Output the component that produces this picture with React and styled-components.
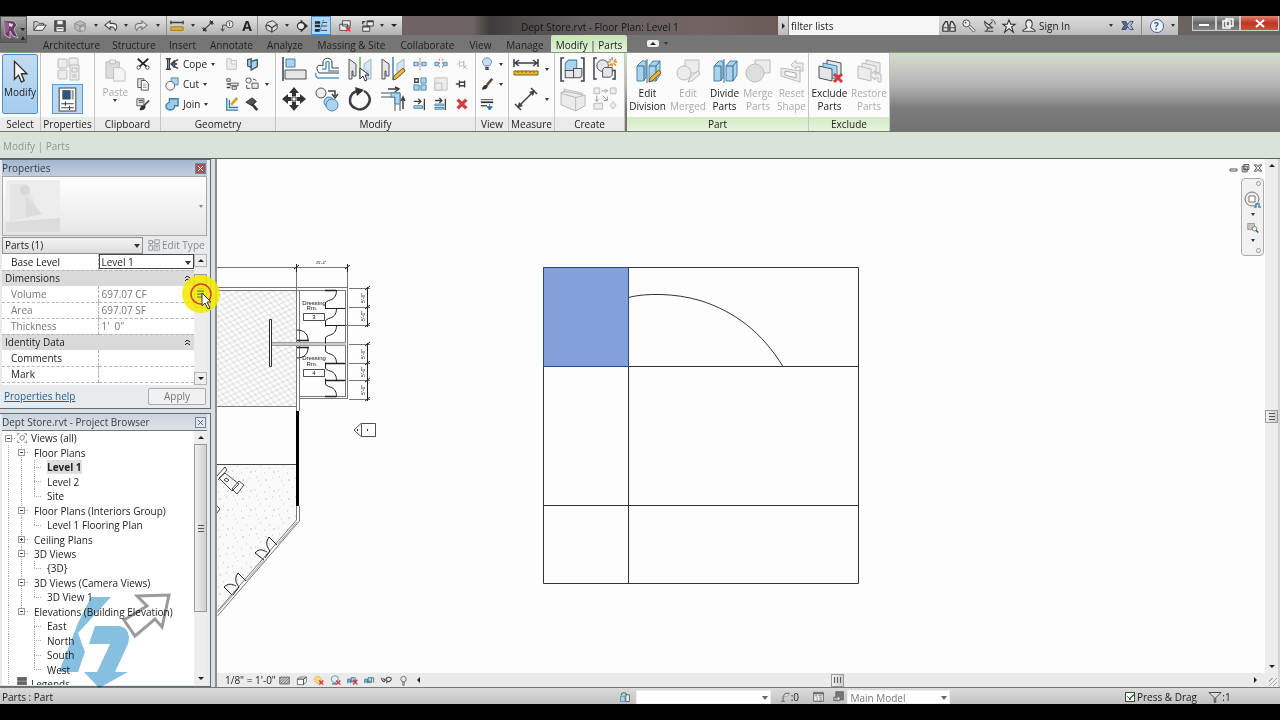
import React from "react";
import styled, { createGlobalStyle } from "styled-components";

const GlobalStyle = createGlobalStyle`
  * { box-sizing: border-box; }
  body { margin: 0; background: #000; }
  body, button, input, select, table {
    font-family: "Open Sans", "Noto Sans", sans-serif;
    font-size: 10px;
    line-height: 14px;
    color: #222;
  }
  button { padding: 0; border: 0; background: none; }
`;

/* ---------- icons ---------- */

const dark = { fill: "none", stroke: "#3c4045", strokeWidth: 1.5 };
const thin = { fill: "none", stroke: "#3c4045", strokeWidth: 1 };
const pale = { fill: "#ececec", stroke: "#bcbcbc", strokeWidth: 1 };
const blue = { fill: "#a9d3ee", stroke: "#4585ac", strokeWidth: 1 };
const grey = { fill: "#e6e6e8", stroke: "#4c5055", strokeWidth: 1 };
const red = { fill: "none", stroke: "#d0363c", strokeWidth: 2 };

const art = {
  open: <><path d="M1 13V3h4l2 2h5v3" {...thin} /><path d="M1 13L5 7h10l-4 6z" fill="#eee" stroke="#333" /></>,
  save: <><path d="M2 2h12v12H2z" fill="#555" stroke="#333" /><path d="M5 2h6v4H5zM4 9h8v5H4z" fill="#eee" /><path d="M5 11h6" {...thin} /></>,
  cubeDim: <><path d="M2 5l6-3 6 3v6l-6 4-6-4z" fill="#bbb" stroke="#888" /><path d="M2 5l6 3 6-3M8 8v7" fill="none" stroke="#888" /><circle cx="11" cy="11" r="3" fill="#ccc" stroke="#888" /></>,
  undo: <path d="M1 7l6-5v3h3c5 0 6 4 3 8-1-3-2-4-6-4v3z" fill="#eee" stroke="#444" strokeWidth="1.2" />,
  redo: <path d="M15 7L9 2v3H6C1 5 0 9 3 13c1-3 2-4 6-4v3z" fill="#ddd" stroke="#777" strokeWidth="1.2" />,
  ruler: <><path d="M1 4h14M1 2v4M15 2v4" {...dark} /><path d="M1 9h14v4H1z" fill="#e5b12f" stroke="#9a7414" /></>,
  diag: <><path d="M3 13L13 3" {...dark} /><path d="M1 10l5 5M10 1l5 5" {...thin} /><path d="M2 14l1-5 4 4zM14 2L9 3l4 4z" fill="#333" /></>,
  tag: <><circle cx="11" cy="6" r="4" fill="#eee" stroke="#444" /><path d="M7 7H3v6M1 11l2 3 2-3" {...thin} /><path d="M10 5l1-1v4" {...thin} /></>,
  house: <><path d="M2 8l2-4 6-2 5 4v5l-6 4-6-3z" fill="#ddd" stroke="#333" /><path d="M2 8l3-1 4 3 6-4M9 10v5" {...dark} /></>,
  section: <><path d="M8 1l8 7-8 7z" fill="#333" /><circle cx="8" cy="8" r="4" fill="#eee" stroke="#333" strokeWidth="1.5" /><path d="M8 1v14" {...thin} /><circle cx="8" cy="8" r="3" fill="#eee" /></>,
  lines: <><path d="M1 4h6M1 8h6M1 13h6" stroke="#1f2d3a" strokeWidth="3" /><path d="M9 4h6M8 8h7M8 13h7" {...thin} /><path d="M11 1L6 15" stroke="#3c86bb" /></>,
  closeWins: <><path d="M5 2h9v6H5zM2 6h9v7H2z" fill="#eee" stroke="#444" /><path d="M9 9l5 5M14 9l-5 5" {...red} /></>,
  switchWins: <><path d="M7 2h7v6H7zM2 8h8v6H2z" fill="#eee" stroke="#333" /><path d="M7 3h7M2 9h8" {...dark} /><path d="M2 6V3h3" {...dark} /></>,
  binoc: <><path d="M1 14V8l3-5h2l1 5v6zM9 14V8l1-5h2l3 5v6z" fill="#ddd" stroke="#333" strokeWidth="1.4" /><path d="M7 7h2M1 10h6M9 10h6" {...thin} /></>,
  key: <><path d="M7 8l6 7 2-2-6-6" fill="#eee" stroke="#444" /><circle cx="5" cy="5" r="4" fill="#eee" stroke="#444" /><circle cx="4" cy="4" r="1" fill="#444" /></>,
  dish: <><path d="M3 3c0 6 4 8 9 7zM3 14h10M7 10l-2 4M8 7l4-4" fill="#ddd" stroke="#444" strokeWidth="1.3" /><path d="M10 1c3 0 5 1 5 5" {...thin} /></>,
  star: <path d="M8 1l2 5h5l-4 3 2 6-5-4-5 4 2-6-4-3h5z" fill="#eee" stroke="#333" strokeWidth="1.2" />,
  person: <path d="M1 14c0-3 4-3 5-4-3-3-2-9 2-9s5 6 2 9c1 1 5 1 5 4z" fill="#eee" stroke="#444" strokeWidth="1.2" />,
  exchange: <><path d="M1 3h5l3 5-3 5H1l3-5z" fill="#4e6b9c" stroke="#333f5c" /><path d="M15 3h-4L7 8l4 5h4l-3-5z" fill="#aebdd6" stroke="#333f5c" /></>,
  cursor: <path d="M4 1v13l3-3 2 5 2-1-2-5h4z" fill="#fff" stroke="#333" strokeWidth="1" />,
  typeProps: <><rect x="2" y="2" width="9" height="9" rx="1" {...pale} /><rect x="13" y="1" width="9" height="9" rx="1" {...pale} /><rect x="2" y="13" width="9" height="9" rx="1" {...pale} /><path d="M14 8h9v15h-9z" {...pale} /><path d="M16 11h5v4h-5zM16 18h5M16 20h5" stroke="#bcbcbc" fill="none" /></>,
  props: <><path d="M4 1h16v22H4z" fill="#fff" stroke="#444" /><path d="M7 3h8v9H7z" fill="#2f5476" /><path d="M17 3v9" stroke="#999" strokeWidth="2" /><path d="M6 16h12M6 20h12M10 14v4M14 18v4" {...thin} /></>,
  paste: <><path d="M2 3h14v17H2z" fill="#ddd" stroke="#bbb" /><path d="M6 1h6v4H6z" {...pale} /><path d="M10 9h8l4 4v10H10z" fill="#f5f5f5" stroke="#c0c0c0" /></>,
  cutClip: <><path d="M2 2l10 9M14 2L4 11" stroke="#222" strokeWidth="2" /><circle cx="3" cy="12" r="2" {...thin} /><circle cx="13" cy="12" r="2" {...thin} /></>,
  copyClip: <><path d="M2 2h7v10H2z" {...grey} /><path d="M6 4h5l3 3v8H6z" fill="#fff" stroke="#444" /><path d="M8 8h4M8 10h4M8 12h4" stroke="#999" /></>,
  match: <><path d="M1 2h8v8H1z" {...grey} /><path d="M3 4h5M3 6h5" {...thin} /><path d="M15 4L9 10" stroke="#444" strokeWidth="2" /><path d="M4 15c1-5 3-6 7-5 0 4-3 6-7 5z" fill="#333" /></>,
  cope: <><path d="M1 2h6M1 14h6M3 2v12M5 2v12" {...dark} /><path d="M15 3l-4 2v6l4 2M14 8H8M11 4L7 8l4 4" {...dark} /></>,
  cut: <><path d="M7 1h8v8H7z" {...blue} /><circle cx="6" cy="10" r="5" fill="#f5f5f5" stroke="#555" /></>,
  join: <path d="M5 2h10v8h-4c0 7-10 6-10 0 0-2 2-3 4-4z" fill="#9ccbe8" stroke="#3c7faa" strokeWidth="1.5" />,
  wallDim: <><path d="M2 2h5v6h6v6H2z" {...pale} /><path d="M7 4h6v4" {...pale} /></>,
  face: <path d="M3 3l4-1v10l-4-2zM7 5l7-2v8l-7 4z" fill="#a9d3ee" stroke="#3b5870" strokeWidth="1.5" />,
  beam: <><path d="M2 2h4v3H2z" {...grey} /><path d="M2 8h4M2 12h4" {...dark} /><path d="M6 7h9v3H6zM8 11h5v3H8z" {...grey} /></>,
  paint: <><circle cx="4" cy="4" r="3" {...thin} /><path d="M2 9v4h4M9 2l4 2" {...thin} /><path d="M8 7h7v6H8z" {...grey} /></>,
  split: <><path d="M2 1v14h13M5 3v9h10" stroke="#2f78a8" fill="none" strokeWidth="1.5" /><path d="M14 1L7 9" stroke="#d99b22" strokeWidth="3" /></>,
  hammer: <><path d="M1 6l7-5 5 4-5 5z" fill="#555" stroke="#222" /><path d="M8 8l6 7" stroke="#333" strokeWidth="3" /></>,
  align: <><path d="M1 0v24" {...dark} /><path d="M4 2h9v8H4z" {...blue} /><path d="M3 13h21v9H3z" {...grey} /></>,
  offset: <><path d="M24 16H4c-5-7 0-9 4-7V5c0-5 9-5 9 0v6h7" {...thin} /><path d="M24 21H3c-2-1-3-3-2-5M11 12V6c0-2 3-2 3 0v8h10M7 12h4" fill="none" stroke="#5b9dc6" strokeWidth="1.5" /></>,
  mirrorPick: <><path d="M1 2l7 5v12H5v-5H4v8H1z" {...grey} /><path d="M23 2l-7 5v12h3v-5h1v8h3z" fill="#d5e6f2" stroke="#9bb4c4" /><path d="M12 0v22" stroke="#65b55a" strokeWidth="1.5" /><path d="M12 11v11l3-3 2 5 2-1-2-5h4z" fill="#fff" stroke="#333" /></>,
  mirrorDraw: <><path d="M1 2l7 5v12H5v-5H4v8H1z" {...grey} /><path d="M23 2l-7 5v12h3v-5h4z" fill="#d5e6f2" stroke="#9bb4c4" /><path d="M12 0v23" stroke="#3b87bd" strokeWidth="1.5" /><path d="M12 23l1-4 9-8 2 3-9 8z" fill="#efb83b" stroke="#7b5614" /></>,
  move: <><path d="M12 0l5 6h-3v3h-4V6H7zM12 24l5-6h-3v-3h-4v3H7zM0 12l6-5v3h3v4H6v3zM24 12l-6-5v3h-3v4h3v3z" fill="#333" /><path d="M10 10h4v4h-4z" fill="#fff" stroke="#333" /></>,
  copy: <><circle cx="6" cy="6" r="5" fill="#eee" stroke="#555" /><path d="M13 4h7v5M17 7l3 4 3-4" {...dark} /><circle cx="14" cy="15" r="5" {...blue} /><circle cx="17" cy="18" r="6" {...blue} /></>,
  rotate: <><path d="M9 4C0 7 0 18 7 21c9 5 17-5 14-12-1-2-3-4-5-5" fill="none" stroke="#3b3e42" strokeWidth="2.5" /><path d="M7 0l9 3-7 6z" fill="#333" /></>,
  trim: <><path d="M7 2h10M14 0l4 2-4 3M22 22V12M20 14l2-4 2 4" {...dark} /><path d="M0 6h19v18M0 10h14v14" stroke="#4c4f54" fill="none" /><path d="M10 6h9v11h-5v-7h-4z" {...blue} /></>,
  split1: <><path d="M1 6h5v4H1zM10 6h5v4h-5z" {...blue} /><path d="M8 1v14" stroke="#c44" strokeDasharray="2 1" /></>,
  split2: <><path d="M1 6h4v4H1zM11 6h4v4h-4z" {...blue} /><path d="M6 2v12M10 2v12" stroke="#c55" strokeDasharray="2 2" /></>,
  unpin: <><path d="M2 8h3M5 4v8M5 6h5v4H5M10 4v8" fill="none" stroke="#bbb" /><path d="M9 9l5 5M14 9l-5 5" stroke="#bbb" /></>,
  array: <><path d="M2 2h4v4H2z" fill="#fff" stroke="#444" strokeWidth="1.5" /><path d="M9 1h6v6H9zM1 9h6v6H1zM9 9h6v6H9z" {...blue} /></>,
  scale: <><path d="M1 1h14v14H1z" {...pale} /><path d="M1 7h8v8H1z" {...pale} /></>,
  pin: <path d="M1 8h4M5 4v8M5 6h6v4H5M11 4v8" {...dark} />,
  extend1: <><path d="M1 5h8M6 2l3 3-3 3" {...dark} /><path d="M1 10h10v3H1z" {...blue} /><path d="M13 2v13" {...dark} /></>,
  extend2: <><path d="M1 4h8M6 1l3 3-3 3" {...dark} /><path d="M1 8h10v2H1zM1 12h10v2H1z" {...blue} /><path d="M13 2v13" {...dark} /></>,
  del: <path d="M3 3l10 10M13 3L3 13" stroke="#cf3f45" strokeWidth="4" />,
  bulb: <><path d="M5 10C0 4 5 1 8 1s8 3 3 9z" fill="#c8dcf5" stroke="#6b86b5" /><path d="M6 12h4M6 14h4" {...dark} /></>,
  brush: <><path d="M14 2L8 9" stroke="#6b4a2c" strokeWidth="3" /><path d="M2 14c1-4 4-6 7-5 0 4-3 6-7 5z" fill="#333" /></>,
  lineWork: <><path d="M1 3h14" {...thin} /><path d="M1 6h14" stroke="#333" strokeWidth="2" /><path d="M1 10h7" {...dark} /><path d="M11 8v4M8 11l3 4 3-4z" fill="#3577a8" stroke="#3577a8" /></>,
  measureBig: <><path d="M1 6h22M5 3L1 6l4 3M19 3l4 3-4 3M0 2v8M24 2v8" {...dark} /><path d="M0 14h24v4H0z" fill="#eab72f" stroke="#87620f" /><path d="M4 14v2M8 14v2M12 14v2M16 14v2M20 14v2" stroke="#87620f" /></>,
  dimBig: <><path d="M4 20L20 4M1 17l6 6M17 1l6 6" {...dark} /><path d="M3 21l2-6 4 4zM21 3l-6 2 4 4z" fill="#444" /></>,
  group: <><path d="M4 1H1v22h3M20 1h3v22h-3" {...dark} /><path d="M5 6l3-3h8v9h-3v1H5z" {...blue} /><path d="M5 13h8v7H5zM13 11h8v7l-2 2h-6z" {...grey} /></>,
  similar: <><path d="M4 1H1v22h3M20 14h3v9h-3" {...dark} /><circle cx="10" cy="9" r="6" {...grey} /><path d="M10 13l2-2h8v8l-2 2h-8z" {...grey} /><path d="M20 0v10M15 5h10M17 2l7 7M24 2l-7 7" stroke="#e3872b" strokeWidth="1.5" /><circle cx="20" cy="5" r="2" fill="#fff3c0" /></>,
  assembly: <><path d="M4 6V2l17 4v13" {...pale} /><path d="M1 6l14 4 9-2v10l-9 5-14-6z" {...pale} /><path d="M1 6l3-2 20 4M15 10v13" {...pale} fill="none" /></>,
  parts: <><path d="M1 1h6v6H1zM18 1h6v6h-6zM1 17h9v6H1zM18 19l3-4 3 4-3 4z" {...pale} /><path d="M9 4h6M13 2l2 2-2 2M4 9v6M2 13l2 2 2-2M10 9l5 5M15 10v4h-4" fill="none" stroke="#999" /></>,
  divide: <><path d="M1 7l5-5h4v17l-3 3H1zM13 7l4-5h7v14l-4 6h-7z" {...blue} /><path d="M1 7h7v15M13 7h7v15M20 7l4-5M11 0v24" fill="none" stroke="#376787" /></>,
  editMerged: <><path d="M9 1h14v13H9z" {...pale} /><circle cx="8" cy="14" r="7" {...pale} /><path d="M12 23l2-5 8-6 2 3-8 7z" {...pale} /></>,
  merge: <><path d="M9 1h15v13H9z" {...pale} /><circle cx="9" cy="14" r="9" fill="#dedede" stroke="#bbb" /></>,
  reset: <><path d="M1 9l19 3v11L1 17z" {...pale} /><path d="M5 12l11 2v5L5 16z" fill="#fff" stroke="#aaa" /><path d="M11 6l5-5v3h7v8h-3V8h-4v2z" {...pale} /></>,
  exclude: <><path d="M9 1l14 3v13L9 14z" {...grey} /><path d="M5 4l14 3v13L5 17z" {...blue} /><path d="M1 7l13 3v12L1 19z" {...grey} /><path d="M16 15l8 8M24 15l-8 8" stroke="#d8363a" strokeWidth="3" /></>,
  restore: <><path d="M9 1l14 3v10L9 11z" {...pale} /><path d="M5 4l14 3v10L5 14z" {...pale} /><path d="M1 7l13 3v12L1 19z" {...pale} /><path d="M13 16l5-4v3h6v8h-3v-4h-3v2z" {...pale} /></>,
  pencilOver: <path d="M13 23l1-4 9-8 2 3-9 8z" fill="#efb83b" stroke="#7b5614" />,
  editType: <path d="M1 2h5v4H1zM9 1h6v5H9zM1 9h5v6H1zM8 8h7v7H8zM10 10h3M10 12h3M3 6v3M6 4h3" fill="none" stroke="#888" />,
  viewsRoot: <><path d="M1 4V1h3M12 1h3v3M1 12v3h3M15 12v3h-3" {...thin} /><path d="M5 6l3-2 4 1-1 5-3 2-3-2z" {...thin} /></>,
  detail: <><path d="M1 3h14v10H1z" fill="#ccc" stroke="#444" /><path d="M1 6l3-3M1 10l7-7M2 13L12 3M6 13l9-9M10 13l5-5" stroke="#555" /></>,
  model: <path d="M2 6l3-3h10l-4 3zM2 6h9v8H2zM11 6l4-3v7l-4 4z" fill="#fff" stroke="#444" />,
  sun: <><circle cx="7" cy="7" r="5" fill="#f6dc7d" stroke="#c79023" strokeDasharray="2 1" /><path d="M9 8l6 6M15 8l-6 6" {...red} /></>,
  shadow: <><circle cx="7" cy="6" r="5" fill="#e4f0f6" stroke="#3a7696" /><path d="M3 13h6" {...dark} /><path d="M9 8l6 6M15 8l-6 6" {...red} /></>,
  crop: <><path d="M1 12V6h4v6M6 4h6v6H6zM1 9h13" fill="#bfdae8" stroke="#3a7696" strokeWidth="1.3" /><path d="M9 7l6 7M15 7l-6 7" {...red} /></>,
  cropShow: <><path d="M1 12V6h4v6M6 4h5v7H6zM1 9h9" fill="#bfdae8" stroke="#3a7696" strokeWidth="1.3" /><path d="M14 4v7M11 4h3" {...thin} /></>,
  hide: <path d="M0 4c3 6 4 7 6 4s4 0 2 4M7 6c3-5 8-2 8 0s-4 5-7 3M3 5l4 3" {...dark} />,
  reveal: <><circle cx="8" cy="6" r="4" {...thin} /><path d="M7 10v5h2v-5" {...thin} /></>,
  workset: <><path d="M2 7h6v7H2z" {...blue} /><path d="M9 5h5v9H9z" {...grey} /><path d="M3 6c0-5 7-5 7 0" stroke="#3f8a4b" fill="none" strokeWidth="1.5" /></>,
  editable: <><path d="M2 15h6M5 14V7l4-5h6" stroke="#777" fill="none" strokeWidth="2" /><path d="M5 8l4-5h6l-2 3z" fill="#eee" stroke="#888" /></>,
  option: <><path d="M1 2h14v13H1z" fill="#f4f4f4" stroke="#333" /><path d="M1 4h14" {...dark} /><path d="M3 7h3M8 7h5M5 10h2M9 10h4M5 13h2M9 13h4" {...thin} /></>,
  optionAdd: <><path d="M4 1h11v12H4z" fill="#777" stroke="#555" /><path d="M1 9h8v5H1z" fill="#aaa" stroke="#555" /><path d="M7 7l4 4-4 4" fill="#ddd" stroke="#555" /></>,
  funnel: <path d="M0 2h16L9 9v6H7V9z" fill="#ddd" stroke="#444" strokeWidth="1.3" />,
  wheel: <><circle cx="7" cy="7" r="7" fill="#eee" stroke="#777" /><path d="M4 4h6v6H4z" fill="#fff" stroke="#777" /><path d="M9 15h2v-3h2M14 11v4h2" stroke="#5287a5" fill="none" strokeWidth="1.5" /></>,
  zoomRegion: <><path d="M1 2h9v8H1z" fill="#c9c9bb" stroke="#888" /><circle cx="10" cy="9" r="3" fill="#eef5f9" stroke="#48677a" /><path d="M12 11l3 3" {...dark} /></>,
  restoreWin: <><path d="M5 1h9v9H5zM2 4h9v10H2z" fill="#eee" stroke="#444" strokeWidth="1.5" /><path d="M5 7h3v4H5z" {...thin} /></>,
  closeDoc: <path d="M2 3h4l2 3 2-3h4l-4 5 4 5h-4l-2-3-2 3H2l4-5z" fill="#fff" stroke="#444" strokeWidth="1.5" />,
  legend: <path d="M1 2h14v5H1zM1 9h14v5H1z" fill="#666" stroke="#444" />,
};

const Svg = styled.svg`
  display: block;
  flex: none;
  overflow: visible;
`;

function Icon({ name, size = 13, box = 16, children }) {
  return (
    <Svg width={size} height={size} viewBox={`0 0 ${box} ${box}`} aria-hidden="true">
      {art[name]}
      {children}
    </Svg>
  );
}

const Caret = styled.span`
  flex: none;
  border: solid transparent;
  border-width: 3px 2px 0;
  border-top-color: ${(p) => p.$color || "#333"};
`;

/* ---------- frame ---------- */

const Screen = styled.div`
  display: flex;
  flex-direction: column;
  height: 100vh;
  min-height: 640px;
  border: solid #000;
  border-width: 16px 0;
  background: #ececec;
  overflow: hidden;
  white-space: nowrap;
`;

const TopArea = styled.header`
  display: flex;
  height: 36px;
  background: #767576;
`;

const AppButton = styled.button`
  display: flex;
  align-items: center;
  justify-content: center;
  width: 27px;
  height: 27px;
  border: 1px solid #555;
  background: linear-gradient(#aaa, #5b5b5b);
`;

const TopRows = styled.div`
  display: flex;
  flex: 1;
  min-width: 0;
  flex-direction: column;
`;

const TitleBar = styled.div`
  display: flex;
  height: 19px;
  background: #6b6264;
`;

const QuickBar = styled.div`
  display: flex;
  width: 375px;
  padding-left: 3px;
  background: linear-gradient(#e3e3e3, #b2b2b2);
`;

const ToolButton = styled.button`
  display: flex;
  align-items: center;
  justify-content: center;
  width: ${(p) => p.$w}px;
  height: 19px;
  border: ${(p) => (p.$on ? "1px solid #4c8cc8" : "0")};
  border-left: ${(p) => (p.$sep ? "1px solid #8a8a8a" : "")};
  background: ${(p) => (p.$on ? "#b4d5f2" : "none")};
`;

const TextTool = styled(ToolButton)`
  font-size: 14px;
  font-weight: 700;
`;

const WindowTitle = styled.div`
  flex: 1;
  padding: 4px 8px 0 119px;
  overflow: hidden;
  color: #151515;
  background: linear-gradient(90deg, #6f6464 0, #6f6464 70px, #3f3b3c 88px, #4b4848 115px, #625e5f 180px, #736564 300px, #6a5a58 370px);
`;

const InfoBar = styled.div`
  display: flex;
  align-items: center;
  width: 400px;
  background: linear-gradient(#dedede, #bbb);
`;

const SearchToggle = styled.button`
  display: flex;
  align-items: center;
  justify-content: center;
  width: 11px;
  height: 19px;
  border-right: 1px solid #888;
`;

const SearchInput = styled.input`
  width: 150px;
  height: 19px;
  padding: 2px;
  border: 0;
  background: #f5f5f5;
`;

const SignIn = styled.button`
  width: 70px;
  text-align: left;
`;

const HelpMark = styled.span`
  width: 14px;
  height: 14px;
  border: 1px solid #48618a;
  border-radius: 50%;
  background: #f1f5fb;
  color: #274f96;
  font-weight: 700;
  line-height: 12px;
`;

const WindowButtons = styled.div`
  display: flex;
  width: 102px;
  padding-left: 14px;
`;

const WindowButton = styled.button`
  display: flex;
  align-items: center;
  justify-content: center;
  width: ${(p) => (p.$close ? 39 : 24)}px;
  height: 15px;
  border: 1px solid #ccc;
  border-top: 0;
  background: ${(p) => (p.$close ? "linear-gradient(#d98572, #c03424 50%, #d2503a)" : "linear-gradient(#aaa, #666 50%, #858585)")};
`;

const Tabs = styled.nav`
  display: flex;
  height: 17px;
  padding-left: 10px;
`;

const Tab = styled.button`
  width: ${(p) => p.$w}px;
  padding-top: 2px;
  border-radius: 2px 2px 0 0;
  background: ${(p) => (p.$on ? "linear-gradient(#c5e4b5, #e4f3dc)" : "none")};
`;

const RibbonToggle = styled.button`
  display: flex;
  align-items: center;
  gap: 5px;
  margin-left: 20px;
`;

const TogglePill = styled.span`
  display: flex;
  align-items: center;
  justify-content: center;
  width: 12px;
  height: 7px;
  border-radius: 2px;
  background: #eee;
`;

/* ---------- ribbon ---------- */

const Ribbon = styled.div`
  display: flex;
  height: 80px;
  border-top: 1px solid #8b9b78;
  border-bottom: 1px solid #6f7769;
  background: linear-gradient(#cfdcc9, #c9c9c4 20%, #b3b3b3 42%, #9a9a9a 56%, #7c7c7c 70%, #737373);
`;

const Panel = styled.section`
  display: flex;
  flex-direction: column;
  width: ${(p) => p.$w}px;
  margin-right: ${(p) => (p.$last ? 2 : 0)}px;
  border-right: 1px solid #c3c6c3;
  background: #fbfbfb;
`;

const PanelBody = styled.div`
  display: flex;
  flex: 1;
  padding: 1px ${(p) => p.$pad || 0}px 3px;
`;

const PanelName = styled.h2`
  height: 14px;
  margin: 0;
  text-align: center;
  font-size: 10px;
  font-weight: 400;
  background: ${(p) => (p.$green ? "linear-gradient(#d3ebc5, #e6f5dd)" : "#ebebeb")};
`;

const Col = styled.div`
  display: grid;
  grid-template-rows: repeat(${(p) => p.$rows}, 1fr);
  width: ${(p) => p.$w}px;
`;

const IconButton = styled.button`
  display: flex;
  align-items: center;
  justify-content: ${(p) => (p.$start ? "flex-start" : "center")};
  gap: 4px;
  min-width: 0;
  min-height: 0;
  border: ${(p) => (p.$on ? "1px solid #5e9ace" : "0")};
  background: ${(p) => (p.$on ? "#b9d8f1" : "none")};
`;

const BigButton = styled.button`
  display: flex;
  flex-direction: column;
  align-items: center;
  width: ${(p) => p.$w}px;
  padding-top: 5px;
  border: ${(p) => (p.$on ? "1px solid #4d91c9" : "0")};
  border-radius: 2px;
  background: ${(p) => (p.$on ? "linear-gradient(#c3dcf1, #a5cdee)" : "none")};
  color: ${(p) => (p.disabled ? "#aaa" : "#222")};
  line-height: 13px;
  white-space: pre-line;
`;

const BigLabel = styled.span`
  margin-top: 4px;
`;

const OptionsBar = styled.div`
  height: 27px;
  padding: 7px 3px 0;
  border-bottom: 1px solid #59635c;
  background: #dae3da;
  color: #8f988f;
`;

/* ---------- workspace ---------- */

const Workspace = styled.div`
  display: flex;
  flex: 1;
  min-height: 0;
  border-right: 2px solid #d4d4d4;
`;

const Dock = styled.aside`
  display: flex;
  flex-direction: column;
  gap: 4px;
  width: 217px;
  padding-right: 4px;
  border-right: 2px solid #8d9093;
  background: #dcdfe1;
`;

const DockPanel = styled.section`
  position: relative;
  display: flex;
  flex: ${(p) => (p.$grow ? "1" : "none")};
  flex-direction: column;
  min-height: 0;
  padding: 0 3px 1px 2px;
  border: 1px solid #626b72;
  border-left: 0;
  background: #e7ebee;
`;

const DockTitle = styled.div`
  display: flex;
  align-items: center;
  justify-content: space-between;
  height: 16px;
  padding-right: 1px;
  background: ${(p) => (p.$active ? "linear-gradient(#a4b7cf, #c2cedd)" : "linear-gradient(#ccd4de, #dde2e8)")};
  color: #3a4048;
`;

const DockClose = styled.button`
  display: flex;
  align-items: center;
  justify-content: center;
  width: 11px;
  height: 11px;
  border: 1px solid #76879a;
  background: ${(p) => (p.$active ? "#a65258" : "#dfe6ee")};
`;

const TypeBox = styled.div`
  display: flex;
  align-items: center;
  justify-content: space-between;
  height: 60px;
  padding: 4px 3px;
  border: 1px solid #a9a9a9;
  background: linear-gradient(#fff, #e6e6e6);
`;

const FilterRow = styled.div`
  display: flex;
  align-items: center;
  gap: 5px;
  height: 18px;
`;

const Picker = styled.span`
  position: relative;
  display: flex;
  width: ${(p) => p.$w};
  height: ${(p) => p.$h}px;
  &::after {
    content: "";
    position: absolute;
    right: 3px;
    top: 50%;
    margin-top: -1px;
    border: solid transparent;
    border-width: 4px 3px 0;
    border-top-color: ${(p) => p.$arrow || "#333"};
  }
`;

const Select = styled.select`
  appearance: none;
  width: 100%;
  height: 100%;
  padding: 0 2px;
  border: 1px solid ${(p) => p.$line || "#8f8f8f"};
  border-radius: 0;
  background: ${(p) => p.$bg || "#fff"};
  color: ${(p) => p.$color || "#222"};
`;

const EditType = styled.button`
  display: flex;
  align-items: center;
  gap: 2px;
  color: #888;
`;

const GridArea = styled.div`
  display: flex;
  height: 131px;
  overflow: hidden;
  background: #fff;
`;

const PropTable = styled.table`
  flex: 1;
  table-layout: fixed;
  border-collapse: collapse;
  align-self: flex-start;
`;

const PropRow = styled.tr`
  height: 16px;
  color: ${(p) => (p.$locked ? "#777" : "#222")};
`;

const PropName = styled.th`
  width: 96px;
  padding: 0 0 0 9px;
  border-bottom: 1px dashed #b5b5b5;
  text-align: left;
  font-weight: 400;
`;

const PropValue = styled.td`
  padding: 0;
  border: dashed #b5b5b5;
  border-width: 0 0 1px 1px;
`;

const PropInput = styled.input`
  width: 100%;
  height: 15px;
  padding: 0 3px;
  border: 0;
  background: none;
  color: inherit;
`;

const GroupCell = styled.th`
  padding: 0 4px 0 3px;
  background: #dadada;
  text-align: left;
  font-weight: 400;
`;

const GroupHead = styled.span`
  display: flex;
  align-items: center;
  justify-content: space-between;
`;

const ScrollTrack = styled.div`
  display: flex;
  flex-direction: column;
  align-items: center;
  width: 13px;
  background: #ededed;
`;

const ScrollArrow = styled.button`
  display: flex;
  align-items: center;
  justify-content: center;
  width: 13px;
  height: 13px;
  border: ${(p) => (p.$boxed ? "1px solid #b5b5b5" : "0")};
`;

const Arrow = styled.span`
  border: 3px solid transparent;
  ${(p) => ({
    up: "border-top: 0; border-bottom-color: #222;",
    down: "border-bottom: 0; border-top-color: #222;",
    left: "border-left: 0; border-right-color: #222;",
    right: "border-right: 0; border-left-color: #222;",
  })[p.$dir]}
`;

const Thumb = styled.div`
  display: flex;
  align-items: center;
  justify-content: center;
  width: 13px;
  height: ${(p) => p.$h};
  border: 1px solid #999;
  background: linear-gradient(90deg, #f0f0f0, #cfcfcf);
`;

const Grip = styled.span`
  width: ${(p) => (p.$side ? 7 : 6)}px;
  height: ${(p) => (p.$side ? 6 : 7)}px;
  background: repeating-linear-gradient(${(p) => (p.$side ? "90deg" : "180deg")}, #555 0 1px, transparent 1px 3px);
`;

const Spacer = styled.div`
  flex: ${(p) => p.$grow || 1};
`;

const PropFooter = styled.div`
  display: flex;
  align-items: center;
  justify-content: space-between;
  height: 22px;
  padding: 0 1px 0 2px;
`;

const HelpLink = styled.a`
  color: #22609a;
`;

const ApplyButton = styled.button`
  width: 58px;
  height: 17px;
  border: 1px solid #aaa;
  border-radius: 2px;
  background: #f1f1f1;
  color: #777;
`;

const Highlight = styled.div`
  position: absolute;
  left: 182px;
  top: 115px;
  z-index: 2;
  width: 38px;
  height: 38px;
`;

const BrowserBody = styled.div`
  display: flex;
  flex: 1;
  min-height: 0;
  border-top: 1px solid #777;
  background: #fff;
`;

const Tree = styled.ul`
  display: grid;
  flex: 1;
  grid-template-rows: repeat(17, minmax(0, 1fr)) 8px;
  margin: 0;
  padding: 0;
  list-style: none;
`;

const TreeItem = styled.li`
  display: flex;
  align-items: ${(p) => (p.$clip ? "flex-start" : "center")};
  min-height: 0;
  overflow: hidden;
`;

const Guide = styled.span`
  display: flex;
  flex: none;
  align-items: center;
  justify-content: center;
  align-self: stretch;
  width: 13px;
  background:
    repeating-linear-gradient(#aaa 0 1px, transparent 1px 2px) 6px 0 / 1px ${(p) => ({ full: "100%", half: "50%" })[p.$v] || "0"} no-repeat,
    repeating-linear-gradient(90deg, #aaa 0 1px, transparent 1px 2px) 6px 50% / ${(p) => (p.$h ? 7 : 0)}px 1px no-repeat;
`;

const Fold = styled.button`
  width: 7px;
  height: 7px;
  border: 1px solid #999;
  background:
    linear-gradient(#444, #444) center / 3px 1px no-repeat,
    linear-gradient(#444, #444) center / 1px ${(p) => (p.$closed ? 3 : 0)}px no-repeat,
    #fff;
`;

const TreeText = styled.span`
  padding: 0 1px 0 ${(p) => (p.$root ? 3 : 6)}px;
  background: ${(p) => (p.$on ? "#dedede" : "none")};
  background-clip: content-box;
  font-weight: ${(p) => (p.$on ? 700 : 400)};
`;

const Watermark = styled.svg`
  position: absolute;
  left: 58px;
  bottom: -6px;
  z-index: 1;
  width: 116px;
  height: 100px;
  mix-blend-mode: multiply;
  pointer-events: none;
`;

const ViewArea = styled.main`
  display: flex;
  flex: 1;
  min-width: 0;
  flex-direction: column;
`;

const ViewRow = styled.div`
  position: relative;
  display: flex;
  flex: 1;
  min-height: 0;
`;

const Canvas = styled.div`
  flex: 1;
  min-width: 0;
  overflow: hidden;
  background: #fdfdfd;
`;

const DocButtons = styled.div`
  position: absolute;
  right: 15px;
  top: 4px;
  display: flex;
  gap: 3px;
`;

const NavBar = styled.div`
  position: absolute;
  right: 14px;
  top: 19px;
  display: flex;
  flex-direction: column;
  align-items: center;
  justify-content: space-between;
  width: 23px;
  height: 78px;
  padding: 2px 0;
  border: 1px solid #aaa;
  border-radius: 4px;
  background: #f1f1f1;
`;

const NavDot = styled.button`
  align-self: flex-end;
  width: 5px;
  height: 5px;
  margin-right: 2px;
  border: 1px solid #999;
  border-radius: 50%;
`;

const ViewControls = styled.div`
  display: flex;
  align-items: center;
  height: 14px;
  padding-left: 8px;
  background: #ebebeb;
`;

const ScaleButton = styled.button`
  width: 51px;
  text-align: left;
`;

const ResizeGrip = styled.div`
  width: 8px;
  height: 8px;
  margin: 4px 1px 0 7px;
  background: repeating-linear-gradient(135deg, #eee 0 2px, #aaa 2px 3px);
`;

const StatusBar = styled.footer`
  display: flex;
  align-items: center;
  height: 17px;
  padding-top: 1px;
  border-top: 1px solid #777;
  background: linear-gradient(#dcdcdc, #c2c2c2);
`;

const StatusText = styled.div`
  flex: 0 0 48%;
  padding-left: 2px;
`;

const StatusSlot = styled.div`
  display: flex;
  align-items: center;
  justify-content: center;
  gap: 1px;
  width: ${(p) => p.$w}px;
`;

const DragLabel = styled.label`
  display: flex;
  align-items: center;
  gap: 2px;
  margin-left: auto;
`;

const CheckBox = styled.input`
  appearance: none;
  width: 10px;
  height: 10px;
  margin: 0;
  border: 1px solid #444;
  background: #fff;
  &:checked {
    background:
      linear-gradient(45deg, transparent 42%, #2f7d2f 42% 58%, transparent 58%) 1px 3px / 4px 4px no-repeat,
      linear-gradient(135deg, transparent 42%, #2f7d2f 42% 58%, transparent 58%) 3px 1px / 5px 6px no-repeat,
      #fff;
  }
`;

/* ---------- data ---------- */

const quickTools = [
  ["open", 20], ["save", 20], ["cubeDim", 20], ["caret", 12], ["undo", 18], ["caret", 12], ["redo", 18], ["caret", 16],
  ["ruler", 21, "sep"], ["caret", 11], ["diag", 19], ["tag", 20], ["text", 20], ["house", 26, "sep"], ["caret", 8],
  ["section", 20], ["lines", 20, "on"], ["closeWins", 27], ["switchWins", 19], ["caret", 9], ["more", 16],
];

const tabs = [
  ["Architecture", 69], ["Structure", 56], ["Insert", 41], ["Annotate", 57], ["Analyze", 50],
  ["Massing & Site", 83], ["Collaborate", 69], ["View", 37], ["Manage", 52], ["Modify | Parts", 76],
];

const modifyBig = [
  ["align", "move"], ["offset", "copy"], ["mirrorPick", "rotate"], ["mirrorDraw", "trim"],
];

const modifySmall = [
  ["split1", "array", "extend1"], ["split2", "scale", "extend2"], ["unpin", "pin", "del"],
];

const partTools = [
  ["divide", "Edit\nDivision", 41], ["editMerged", "Edit\nMerged", 40, true], ["divide", "Divide\nParts", 33],
  ["merge", "Merge\nParts", 34, true], ["reset", "Reset\nShape", 33, true],
];

const props = [
  { name: "Base Level", options: true, value: "Level 1" },
  { group: "Dimensions" },
  { name: "Volume", value: "697.07 CF", locked: true },
  { name: "Area", value: "697.07 SF", locked: true },
  { name: "Thickness", value: "1'  0\"", locked: true },
  { group: "Identity Data" },
  { name: "Comments", value: "" },
  { name: "Mark", value: "" },
];

const tree = [
  { t: "Floor Plans", d: 1 },
  { t: "Level 1", d: 2, on: true },
  { t: "Level 2", d: 2 },
  { t: "Site", d: 2, end: true },
  { t: "Floor Plans (Interiors Group)", d: 1 },
  { t: "Level 1 Flooring Plan", d: 2, end: true },
  { t: "Ceiling Plans", d: 1, closed: true },
  { t: "3D Views", d: 1 },
  { t: "{3D}", d: 2, end: true },
  { t: "3D Views (Camera Views)", d: 1 },
  { t: "3D View 1", d: 2, end: true },
  { t: "Elevations (Building Elevation)", d: 1, last: true },
  { t: "East", d: 2, past: true },
  { t: "North", d: 2, past: true },
  { t: "South", d: 2, past: true },
  { t: "West", d: 2, past: true, end: true },
];

const viewTools = ["detail", "model", "sun", "shadow", "crop", "cropShow", "hide", "reveal"];

/* ---------- parts of the page ---------- */

function Title() {
  return (
    <TopArea>
      <AppButton aria-label="Application menu">
        <Svg width="25" height="25" viewBox="0 0 25 25">
          <path d="M3 3l10 1 3 4-3 4 4 9-5-2-3-5v7l-5-3z" fill="#6b3d63" stroke="#c9b0c6" />
          <path d="M8 6l4 1-1 3-3-1z" fill="#ddd" />
          <path d="M3 3l5 3v7l-4 5z" fill="#8d6187" />
          <path d="M19 11h5l-2 3zM20 23l2-4 2 4z" fill="#222" />
        </Svg>
      </AppButton>
      <TopRows>
        <TitleBar>
          <QuickBar>
            {quickTools.map(([name, w, mode], i) => {
              if (name === "text") {
                return <TextTool key={i} $w={w}>A</TextTool>;
              }
              return (
                <ToolButton key={i} $w={w} $on={mode === "on"} $sep={mode === "sep"} aria-label={name}>
                  {name === "caret" && <Caret />}
                  {name === "more" && <Arrow $dir="down" />}
                  {art[name] && <Icon name={name} size={14} />}
                </ToolButton>
              );
            })}
          </QuickBar>
          <WindowTitle>Dept Store.rvt - Floor Plan: Level 1</WindowTitle>
          <InfoBar>
            <SearchToggle aria-label="Search scope"><Arrow $dir="right" /></SearchToggle>
            <SearchInput aria-label="Search" defaultValue="filter lists" />
            {["binoc", "key", "dish", "star", "person"].map((name) => (
              <ToolButton key={name} $w={20} aria-label={name}><Icon name={name} size={14} /></ToolButton>
            ))}
            <SignIn>Sign In</SignIn>
            <Caret />
            <ToolButton $w={28} aria-label="Exchange"><Icon name="exchange" size={13} /></ToolButton>
            <ToolButton $w={30} $sep aria-label="Help"><HelpMark>?</HelpMark></ToolButton>
            <Caret />
          </InfoBar>
          <WindowButtons>
            <WindowButton aria-label="Minimize">
              <Svg width="12" height="8"><path d="M1 5h10v2H1z" fill="#fff" /></Svg>
            </WindowButton>
            <WindowButton aria-label="Restore">
              <Svg width="12" height="11"><path d="M4 1h7v7H4zM1 3h7v7H1z" fill="#777" stroke="#fff" strokeWidth="1.5" /></Svg>
            </WindowButton>
            <WindowButton $close aria-label="Close">
              <Svg width="10" height="9"><path d="M1 1l8 7M9 1L1 8" stroke="#fff" strokeWidth="2" /></Svg>
            </WindowButton>
          </WindowButtons>
        </TitleBar>
        <Tabs>
          {tabs.map(([name, w], i) => (
            <Tab key={name} $w={w} $on={i === tabs.length - 1}>{name}</Tab>
          ))}
          <RibbonToggle aria-label="Minimize ribbon">
            <TogglePill><Arrow $dir="up" /></TogglePill>
            <Caret />
          </RibbonToggle>
        </Tabs>
      </TopRows>
    </TopArea>
  );
}

function Stack({ names, w, size, box }) {
  return (
    <Col $rows={names.length} $w={w}>
      {names.map((name) => (
        <IconButton key={name} aria-label={name}><Icon name={name} size={size} box={box} /></IconButton>
      ))}
    </Col>
  );
}

function CaretStack({ rows, marks, w }) {
  return (
    <Col $rows={rows} $w={w}>
      {marks.map((on, i) => <IconButton key={i} aria-label="More">{on && <Caret />}</IconButton>)}
    </Col>
  );
}

function RibbonBar() {
  return (
    <Ribbon>
      <Panel $w={41}>
        <PanelBody $pad={2}>
          <BigButton $w={36} $on>
            <Icon name="cursor" size={22} />
            <BigLabel>Modify</BigLabel>
          </BigButton>
        </PanelBody>
        <PanelName>Select</PanelName>
      </Panel>
      <Panel $w={54}>
        <PanelBody $pad={11}>
          <Col $rows={2} $w={31}>
            <IconButton disabled aria-label="Type properties"><Icon name="typeProps" size={24} box={24} /></IconButton>
            <IconButton $on aria-label="Properties"><Icon name="props" size={25} box={24} /></IconButton>
          </Col>
        </PanelBody>
        <PanelName>Properties</PanelName>
      </Panel>
      <Panel $w={66}>
        <PanelBody $pad={5}>
          <BigButton $w={33} disabled>
            <Icon name="paste" size={23} box={24} />
            <BigLabel>Paste</BigLabel>
            <Caret />
          </BigButton>
          <Stack names={["cutClip", "copyClip", "match"]} w={26} size={14} />
        </PanelBody>
        <PanelName>Clipboard</PanelName>
      </Panel>
      <Panel $w={115}>
        <PanelBody $pad={4}>
          <Col $rows={3} $w={56}>
            {["Cope", "Cut", "Join"].map((name) => (
              <IconButton key={name} $start>
                <Icon name={name.toLowerCase()} size={14} />
                {name}
                <Caret />
              </IconButton>
            ))}
          </Col>
          <Stack names={["wallDim", "beam", "split"]} w={21} size={14} />
          <Stack names={["face", "paint", "hammer"]} w={20} size={14} />
          <CaretStack rows={3} w={9} marks={[false, true, false]} />
        </PanelBody>
        <PanelName>Geometry</PanelName>
      </Panel>
      <Panel $w={200}>
        <PanelBody $pad={1}>
          {modifyBig.map((names) => <Stack key={names[0]} names={names} w={33} size={24} box={24} />)}
          {modifySmall.map((names) => <Stack key={names[0]} names={names} w={21} size={14} />)}
        </PanelBody>
        <PanelName>Modify</PanelName>
      </Panel>
      <Panel $w={33}>
        <PanelBody $pad={2}>
          <Stack names={["bulb", "brush", "lineWork"]} w={18} size={14} />
          <CaretStack rows={3} w={9} marks={[true, true, false]} />
        </PanelBody>
        <PanelName>View</PanelName>
      </Panel>
      <Panel $w={46}>
        <PanelBody $pad={1}>
          <Stack names={["measureBig", "dimBig"]} w={32} size={24} box={24} />
          <CaretStack rows={2} w={10} marks={[true, true]} />
        </PanelBody>
        <PanelName>Measure</PanelName>
      </Panel>
      <Panel $w={70} $last>
        <PanelBody $pad={2}>
          <Stack names={["group", "assembly"]} w={32} size={25} box={24} />
          <Stack names={["similar", "parts"]} w={34} size={24} box={25} />
        </PanelBody>
        <PanelName>Create</PanelName>
      </Panel>
      <Panel $w={182}>
        <PanelBody>
          {partTools.map(([name, label, w, off]) => (
            <BigButton key={label} $w={w} disabled={off}>
              <Icon name={name} size={24} box={24}>
                {w === 41 && art.pencilOver}
              </Icon>
              <BigLabel>{label}</BigLabel>
            </BigButton>
          ))}
        </PanelBody>
        <PanelName $green>Part</PanelName>
      </Panel>
      <Panel $w={81}>
        <PanelBody>
          <BigButton $w={41}><Icon name="exclude" size={24} box={24} /><BigLabel>{"Exclude\nParts"}</BigLabel></BigButton>
          <BigButton $w={38} disabled><Icon name="restore" size={24} box={24} /><BigLabel>{"Restore\nParts"}</BigLabel></BigButton>
        </PanelBody>
        <PanelName $green>Exclude</PanelName>
      </Panel>
    </Ribbon>
  );
}

function Properties() {
  return (
    <DockPanel>
      <DockTitle $active>
        Properties
        <DockClose $active aria-label="Close properties">
          <Svg width="5" height="5"><path d="M0 0l5 5M5 0L0 5" stroke="#fff" strokeWidth="1" /></Svg>
        </DockClose>
      </DockTitle>
      <TypeBox>
        <Svg width="54" height="52">
          <path d="M0 0h54v52H0z" fill="#ededed" />
          <path d="M4 4h16l14 30-30 8z" fill="#e4e4e4" />
          <circle cx="19" cy="10" r="5" fill="#d8d8d8" />
          <path d="M20 16l16 18-16 4zM0 42l54-4v14H0z" fill="#dcdcdc" />
        </Svg>
        <Caret $color="#888" />
      </TypeBox>
      <FilterRow>
        <Picker $w="141px" $h={17}>
          <Select aria-label="Filter" $bg="linear-gradient(#f4f4f4, #dcdcdc)"><option>Parts (1)</option></Select>
        </Picker>
        <EditType disabled><Icon name="editType" size={12} />Edit Type</EditType>
      </FilterRow>
      <GridArea>
        <PropTable>
          <tbody>
            {props.map((p) => p.group ? (
              <PropRow key={p.group}>
                <GroupCell colSpan={2}>
                  <GroupHead>
                    {p.group}
                    <Svg width="5" height="7"><path d="M0 3l2-2 3 2M0 6l2-2 3 2" fill="none" stroke="#222" /></Svg>
                  </GroupHead>
                </GroupCell>
              </PropRow>
            ) : (
              <PropRow key={p.name} $locked={p.locked}>
                <PropName scope="row">{p.name}</PropName>
                <PropValue>
                  {p.options ? (
                    <Picker $w="100%" $h={15}>
                      <Select aria-label={p.name} $line="#444"><option>{p.value}</option></Select>
                    </Picker>
                  ) : (
                    <PropInput aria-label={p.name} defaultValue={p.value} readOnly={p.locked} />
                  )}
                </PropValue>
              </PropRow>
            ))}
          </tbody>
        </PropTable>
        <ScrollTrack>
          <ScrollArrow $boxed aria-label="Scroll up"><Arrow $dir="up" /></ScrollArrow>
          <Spacer $grow={1} />
          <Thumb $h="34px"><Grip /></Thumb>
          <Spacer $grow={9} />
          <ScrollArrow $boxed aria-label="Scroll down"><Arrow $dir="down" /></ScrollArrow>
        </ScrollTrack>
      </GridArea>
      <PropFooter>
        <HelpLink href="#help">Properties help</HelpLink>
        <ApplyButton>Apply</ApplyButton>
      </PropFooter>
      <Highlight>
        <Svg width="38" height="38">
          <circle cx="19" cy="19" r="19" fill="#f2ea00" opacity="0.85" />
          <path d="M15 16h7M15 19h7M15 22h7" stroke="#5f7a1e" />
          <circle cx="19" cy="19" r="10" fill="none" stroke="#d8401c" strokeWidth="1.5" />
          <path d="M20 18v13l3-3 3 6 2-1-3-6h4z" fill="#fff" stroke="#333" />
        </Svg>
      </Highlight>
    </DockPanel>
  );
}

function Browser() {
  return (
    <DockPanel $grow>
      <DockTitle>
        Dept Store.rvt - Project Browser
        <DockClose aria-label="Close project browser">
          <Svg width="5" height="5"><path d="M0 0l5 5M5 0L0 5" stroke="#567" strokeWidth="1" /></Svg>
        </DockClose>
      </DockTitle>
      <BrowserBody>
        <Tree>
          <TreeItem>
            <Guide $h><Fold aria-label="Collapse" /></Guide>
            <Guide><Icon name="viewsRoot" size={10} /></Guide>
            <TreeText $root>Views (all)</TreeText>
          </TreeItem>
          {tree.map((n) => (
            <TreeItem key={n.t}>
              <Guide $v="full" />
              {n.d === 1 ? (
                <Guide $v={n.last ? "half" : "full"} $h><Fold $closed={n.closed} aria-label="Toggle" /></Guide>
              ) : (
                <>
                  <Guide $v={n.past ? "" : "full"} />
                  <Guide $v={n.end ? "half" : "full"} $h />
                </>
              )}
              <TreeText $on={n.on}>{n.t}</TreeText>
            </TreeItem>
          ))}
          <TreeItem $clip>
            <Guide $v="full" />
            <Guide><Icon name="legend" size={10} /></Guide>
            <TreeText $root>Legends</TreeText>
          </TreeItem>
        </Tree>
        <ScrollTrack>
          <ScrollArrow aria-label="Scroll up"><Arrow $dir="up" /></ScrollArrow>
          <Thumb $h="168px"><Grip /></Thumb>
          <Spacer />
          <ScrollArrow aria-label="Scroll down"><Arrow $dir="down" /></ScrollArrow>
        </ScrollTrack>
      </BrowserBody>
      <Watermark viewBox="58 592 116 100">
        <path d="M91 597h20L78 633l7 19-7 20H59l19-49z" fill="#86bfdf" />
        <path d="M95 626h22c10 0 14 8 11 18l-13 28h13l-29 16-15-16h13l13-28H89z" fill="#86bfdf" />
        <path d="M137 596l32-1-7 32-7-8-20 17-11-16 23-14z" fill="none" stroke="#9a9a9a" strokeWidth="3" />
      </Watermark>
    </DockPanel>
  );
}

function Door({ x, y, flip }) {
  return <path transform={`translate(${x} ${y}) scale(1 ${flip ? -1 : 1})`} d="M0 0h11c0 6-3 9-8 10l-3 2v6" />;
}

function Drawing() {
  return (
    <Svg width="1048" height="513" viewBox="217 159 1048 513" role="img" aria-label="Floor plan">
      <defs>
        <pattern id="hatch" width="8" height="6" patternUnits="userSpaceOnUse" patternTransform="rotate(12)">
          <path d="M0 0l8 6M8 0L0 6" stroke="#dcdcdc" fill="none" />
        </pattern>
        <pattern id="speckle" width="23" height="19" patternUnits="userSpaceOnUse">
          <path d="M3 2h1M12 5h2M19 3h1M7 10h1M16 12h1M2 15h1M11 17h1M20 16h2M5 6h1" stroke="#c4c4c4" />
        </pattern>
      </defs>
      <path d="M217 290h79v117h-79z" fill="url(#hatch)" />
      <path d="M217 464h80v56l-80 93z" fill="#f9f9f9" />
      <path d="M217 464h80v56l-80 93z" fill="url(#speckle)" />
      <g fill="none" stroke="#777" strokeWidth="1">
        <path d="M217 267.500h130M217 287.500h131M217 290.500h128M296.500 265v146M299.500 290v121M345.500 290v107M347.500 265v134M299 396.500h47M299 398.500h49" />
        <path d="M296.500 506v14l-79 91M299.500 506v15l-82 95M217 406.500h80" />
        <path d="M349 288.500h21M349 307.500h21M336 325.500h34M349 344.500h21M349 363.500h21M349 380.500h21M349 399.500h21" />
      </g>
      <path d="M271 344h75" stroke="#ccc" strokeWidth="4" />
      <path d="M271 342.500h75M271 345.500h75" stroke="#999" />
      <path d="M269.500 319.500h2v47h-2z" fill="#fff" stroke="#333" />
      <path d="M217 464.500h80" stroke="#444" />
      <path d="M297.500 411v95" stroke="#000" strokeWidth="3" />
      <g fill="none" stroke="#222">
        <path d="M367.500 287v40M367.500 343v58M296.500 264v8M347.500 264v8" />
        <path d="M294 269l5-4M345 269l5-4M365 290l5-4M365 309l5-4M365 327l5-4M365 346l5-4M365 365l5-4M365 382l5-4M365 401l5-4" />
        <Door x={325.5} y={290.5} />
        <Door x={325.5} y={308.5} />
        <Door x={325.5} y={325.5} />
        <Door x={325.5} y={363.5} flip />
        <Door x={325.5} y={380.5} flip />
        <Door x={325.5} y={396.5} flip />
        <path d="M325 308.500h20M325 325.500h20" />
        <path d="M325 363.500h20M325 380.500h20M325 396.500h11M325 290.500h11M297 340.500h12M297 347.500h12" strokeWidth="1.5" />
        <path d="M297 330c7 0 11 4 11 10M308 348c0 6-4 10-11 10" />
        <path d="M303.500 313.500h21v7h-21zM303.500 369.500h21v7h-21zM361.500 423.500h14v13h-14zM361 423.500l-7 6.500 7 6.500" strokeWidth="0.8" />
        <path d="M367 430h1M357 430h1" strokeWidth="2" />
        <path d="M217 476l8-9 2 3-9 10M219 478l6-5 14 11-7 7zM232 489l7-8 5 4-7 9zM226 478l3 2-2 2-3-2zM217 506l3 3-3 4" strokeWidth="0.8" />
        <path d="M255 553l9 7M255 553c4-5 8-3 12-1M269 537l8 8M269 537c-4 6-2 10 1 14l-5 7" />
        <path d="M224 587l8 8M224 587c4-4 8-3 12-1M238 573l8 8M238 573c-4 6-2 10 1 14l-6 8" />
        <path d="M264 560l-18 21M278 544l19-22M233 595l-16 18" stroke="#999" />
      </g>
      <g fontFamily="Liberation Sans, sans-serif" fontSize="6" textAnchor="middle" fill="#111">
        <text x="314" y="305">Dressing</text>
        <text x="312" y="310">Rm.</text>
        <text x="314" y="319">3</text>
        <text x="314" y="360">Dressing</text>
        <text x="312" y="366">Rm.</text>
        <text x="314" y="375">4</text>
        <text x="321" y="264" fontSize="4">25'-4"</text>
        {[298, 316, 354, 372, 390].map((y) => (
          <text key={y} fontSize="5" transform={`translate(365 ${y}) rotate(-90)`}>5'-0"</text>
        ))}
      </g>
      <path d="M543.500 267.500h85v99h-85z" fill="#83a0da" />
      <g fill="none" stroke="#333">
        <path d="M543.500 267.500h315v316h-315zM628.500 267.500v316M543.500 366.500h315M543.500 505.500h315" />
        <path d="M628.500 297.500C645 293 675 293 700 300.500c35 11 62 32 83 66" />
      </g>
      <path d="M543.500 267.500h85v99h-85z" fill="none" stroke="#2b4788" />
    </Svg>
  );
}

function View() {
  return (
    <ViewArea>
      <ViewRow>
        <Canvas><Drawing /></Canvas>
        <DocButtons>
          <IconButton aria-label="Minimize view"><Svg width="9" height="9"><path d="M1 5h7v2H1z" fill="#fff" stroke="#555" /></Svg></IconButton>
          <IconButton aria-label="Restore view"><Icon name="restoreWin" size={9} /></IconButton>
          <IconButton aria-label="Close view"><Icon name="closeDoc" size={10} /></IconButton>
        </DocButtons>
        <NavBar>
          <NavDot aria-label="Close navigation bar" />
          <IconButton aria-label="Steering wheel"><Icon name="wheel" size={16} /></IconButton>
          <Caret />
          <IconButton aria-label="Zoom region"><Icon name="zoomRegion" size={12} /></IconButton>
          <Caret />
          <NavDot aria-label="Navigation options" />
        </NavBar>
        <ScrollTrack>
          <ScrollArrow aria-label="Scroll up"><Arrow $dir="up" /></ScrollArrow>
          <Spacer />
          <Thumb $h="13px"><Grip /></Thumb>
          <Spacer />
          <ScrollArrow aria-label="Scroll down"><Arrow $dir="down" /></ScrollArrow>
        </ScrollTrack>
      </ViewRow>
      <ViewControls>
        <ScaleButton>1/8" = 1'-0"</ScaleButton>
        {viewTools.map((name) => (
          <ToolButton key={name} $w={17} aria-label={name}><Icon name={name} size={11} /></ToolButton>
        ))}
        <ScrollArrow aria-label="Scroll left"><Arrow $dir="left" /></ScrollArrow>
        <Spacer />
        <Thumb $h="13px"><Grip $side /></Thumb>
        <Spacer />
        <ScrollArrow aria-label="Scroll right"><Arrow $dir="right" /></ScrollArrow>
        <ResizeGrip />
      </ViewControls>
    </ViewArea>
  );
}

function Status() {
  return (
    <StatusBar>
      <StatusText>Parts : Part</StatusText>
      <StatusSlot $w={22}><Icon name="workset" size={12} /></StatusSlot>
      <Picker $w="135px" $h={14} $arrow="#666"><Select aria-label="Workset" $line="#eee"><option> </option></Select></Picker>
      <StatusSlot $w={36}><Icon name="editable" size={10} />:0</StatusSlot>
      <StatusSlot $w={22}><Icon name="option" size={11} /></StatusSlot>
      <StatusSlot $w={18}><Icon name="optionAdd" size={11} /></StatusSlot>
      <Picker $w="103px" $h={14} $arrow="#666">
        <Select aria-label="Design option" $line="#eee" $color="#777"><option>Main Model</option></Select>
      </Picker>
      <DragLabel>
        <CheckBox type="checkbox" defaultChecked />
        Press &amp; Drag
      </DragLabel>
      <StatusSlot $w={46}><Icon name="funnel" size={12} />:1</StatusSlot>
      <StatusSlot $w={37} />
    </StatusBar>
  );
}

export default function App() {
  return (
    <>
      <GlobalStyle />
      <Screen>
        <Title />
        <RibbonBar />
        <OptionsBar>Modify | Parts</OptionsBar>
        <Workspace>
          <Dock>
            <Properties />
            <Browser />
          </Dock>
          <View />
        </Workspace>
        <Status />
      </Screen>
    </>
  );
}
